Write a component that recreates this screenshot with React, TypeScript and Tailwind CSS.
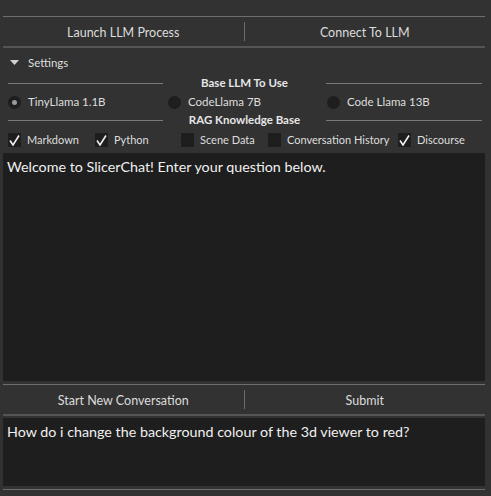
import React from "react";

function QtButton({ label }: { label: string }) {
  return (
    <div className="flex-1 flex items-center justify-center pt-[3px] text-[12.5px] text-[#dcdcdc]">
      {label}
    </div>
  );
}

function ButtonRow({ left, right }: { left: string; right: string }) {
  return (
    <div className="flex h-[32px] border-t border-t-[#6e6e6e] border-b-2 border-b-[#555555] mr-[6px]">
      <QtButton label={left} />
      <div className="w-px bg-[#6a6a6a] my-[5px]" />
      <QtButton label={right} />
    </div>
  );
}

function GroupTitle({ title }: { title: string }) {
  return (
    <div className="flex items-center h-[12px] pl-[5px] pr-[9px]">
      <div className="w-[155px] h-px bg-[#7a7a7a]" />
      <div className="flex-1 text-center text-[11.5px] font-bold text-[#e6e6e6]">{title}</div>
      <div className="w-[156px] h-px bg-[#7a7a7a]" />
    </div>
  );
}

function Radio({ label, checked, width }: { label: string; checked?: boolean; width: string }) {
  return (
    <div className={`flex items-center gap-[7px] whitespace-nowrap ${width}`}>
      <div className="w-[13px] h-[13px] rounded-full bg-[#1e1e1e] flex items-center justify-center">
        {checked && <div className="w-[5px] h-[5px] rounded-full bg-[#9a9a9a]" />}
      </div>
      <span>{label}</span>
    </div>
  );
}

function Check({ label, checked, width }: { label: string; checked?: boolean; width: string }) {
  return (
    <div className={`flex items-center gap-[6px] whitespace-nowrap ${width}`}>
      <div className="w-[13px] h-[14px] bg-[#1e1e1e] flex items-center justify-center">
        {checked && (
          <svg width="11" height="11" viewBox="0 0 11 11">
            <path d="M1 5.5 L4 10 L10 0.5" stroke="#f0f0f0" strokeWidth="1.6" fill="none" />
          </svg>
        )}
      </div>
      <span>{label}</span>
    </div>
  );
}

export default function App() {
  return (
    <div
      className="w-[491px] h-[496px] bg-[#323232] pl-[3px] pt-[16px] overflow-hidden text-[11px] text-[#dedede]"
      style={{ fontFamily: 'Lato, "Noto Sans", sans-serif' }}
    >
      <ButtonRow left="Launch LLM Process" right="Connect To LLM" />

      <div className="flex items-center h-[24px] mt-[3px] pl-[7px] gap-[9px] text-[11.5px]">
        <svg width="9" height="6" viewBox="0 0 9 6">
          <path d="M0 0 L9 0 L4.5 5 Z" fill="#d0d0d0" />
        </svg>
        <span>Settings</span>
      </div>

      <div className="mt-[2px]">
        <GroupTitle title="Base LLM To Use" />
      </div>
      <div className="flex items-center h-[20px] mt-[3px] pl-[5px] text-[11.5px]">
        <Radio label="TinyLlama 1.1B" checked width="w-[160px]" />
        <Radio label="CodeLlama 7B" width="w-[159px]" />
        <Radio label="Code Llama 13B" width="w-[150px]" />
      </div>
      <div className="mt-[2px]">
        <GroupTitle title="RAG Knowledge Base" />
      </div>
      <div className="flex items-center h-[20px] mt-[4px] pl-[5px]">
        <Check label="Markdown" checked width="w-[87px]" />
        <Check label="Python" checked width="w-[86px]" />
        <Check label="Scene Data" width="w-[87px]" />
        <Check label="Conversation History" width="w-[130px]" />
        <Check label="Discourse" checked width="w-[80px]" />
      </div>

      <div className="mt-[3px] h-[228px] mr-[6px] bg-[#1e1e1e] px-[4px] pt-[3px] text-[14.3px] text-[#f0f0f0]">
        Welcome to SlicerChat! Enter your question below.
      </div>

      <div className="mt-[3px]">
        <ButtonRow left="Start New Conversation" right="Submit" />
      </div>

      <div className="mt-[2px] h-[68px] mr-[6px] bg-[#1e1e1e] px-[4px] pt-[3px] text-[14.3px] text-[#f0f0f0]">
        How do i change the background colour of the 3d viewer to red?
      </div>
      <div className="mt-[3px] mr-[6px] h-px bg-[#6e6e6e]" />
    </div>
  );
}
